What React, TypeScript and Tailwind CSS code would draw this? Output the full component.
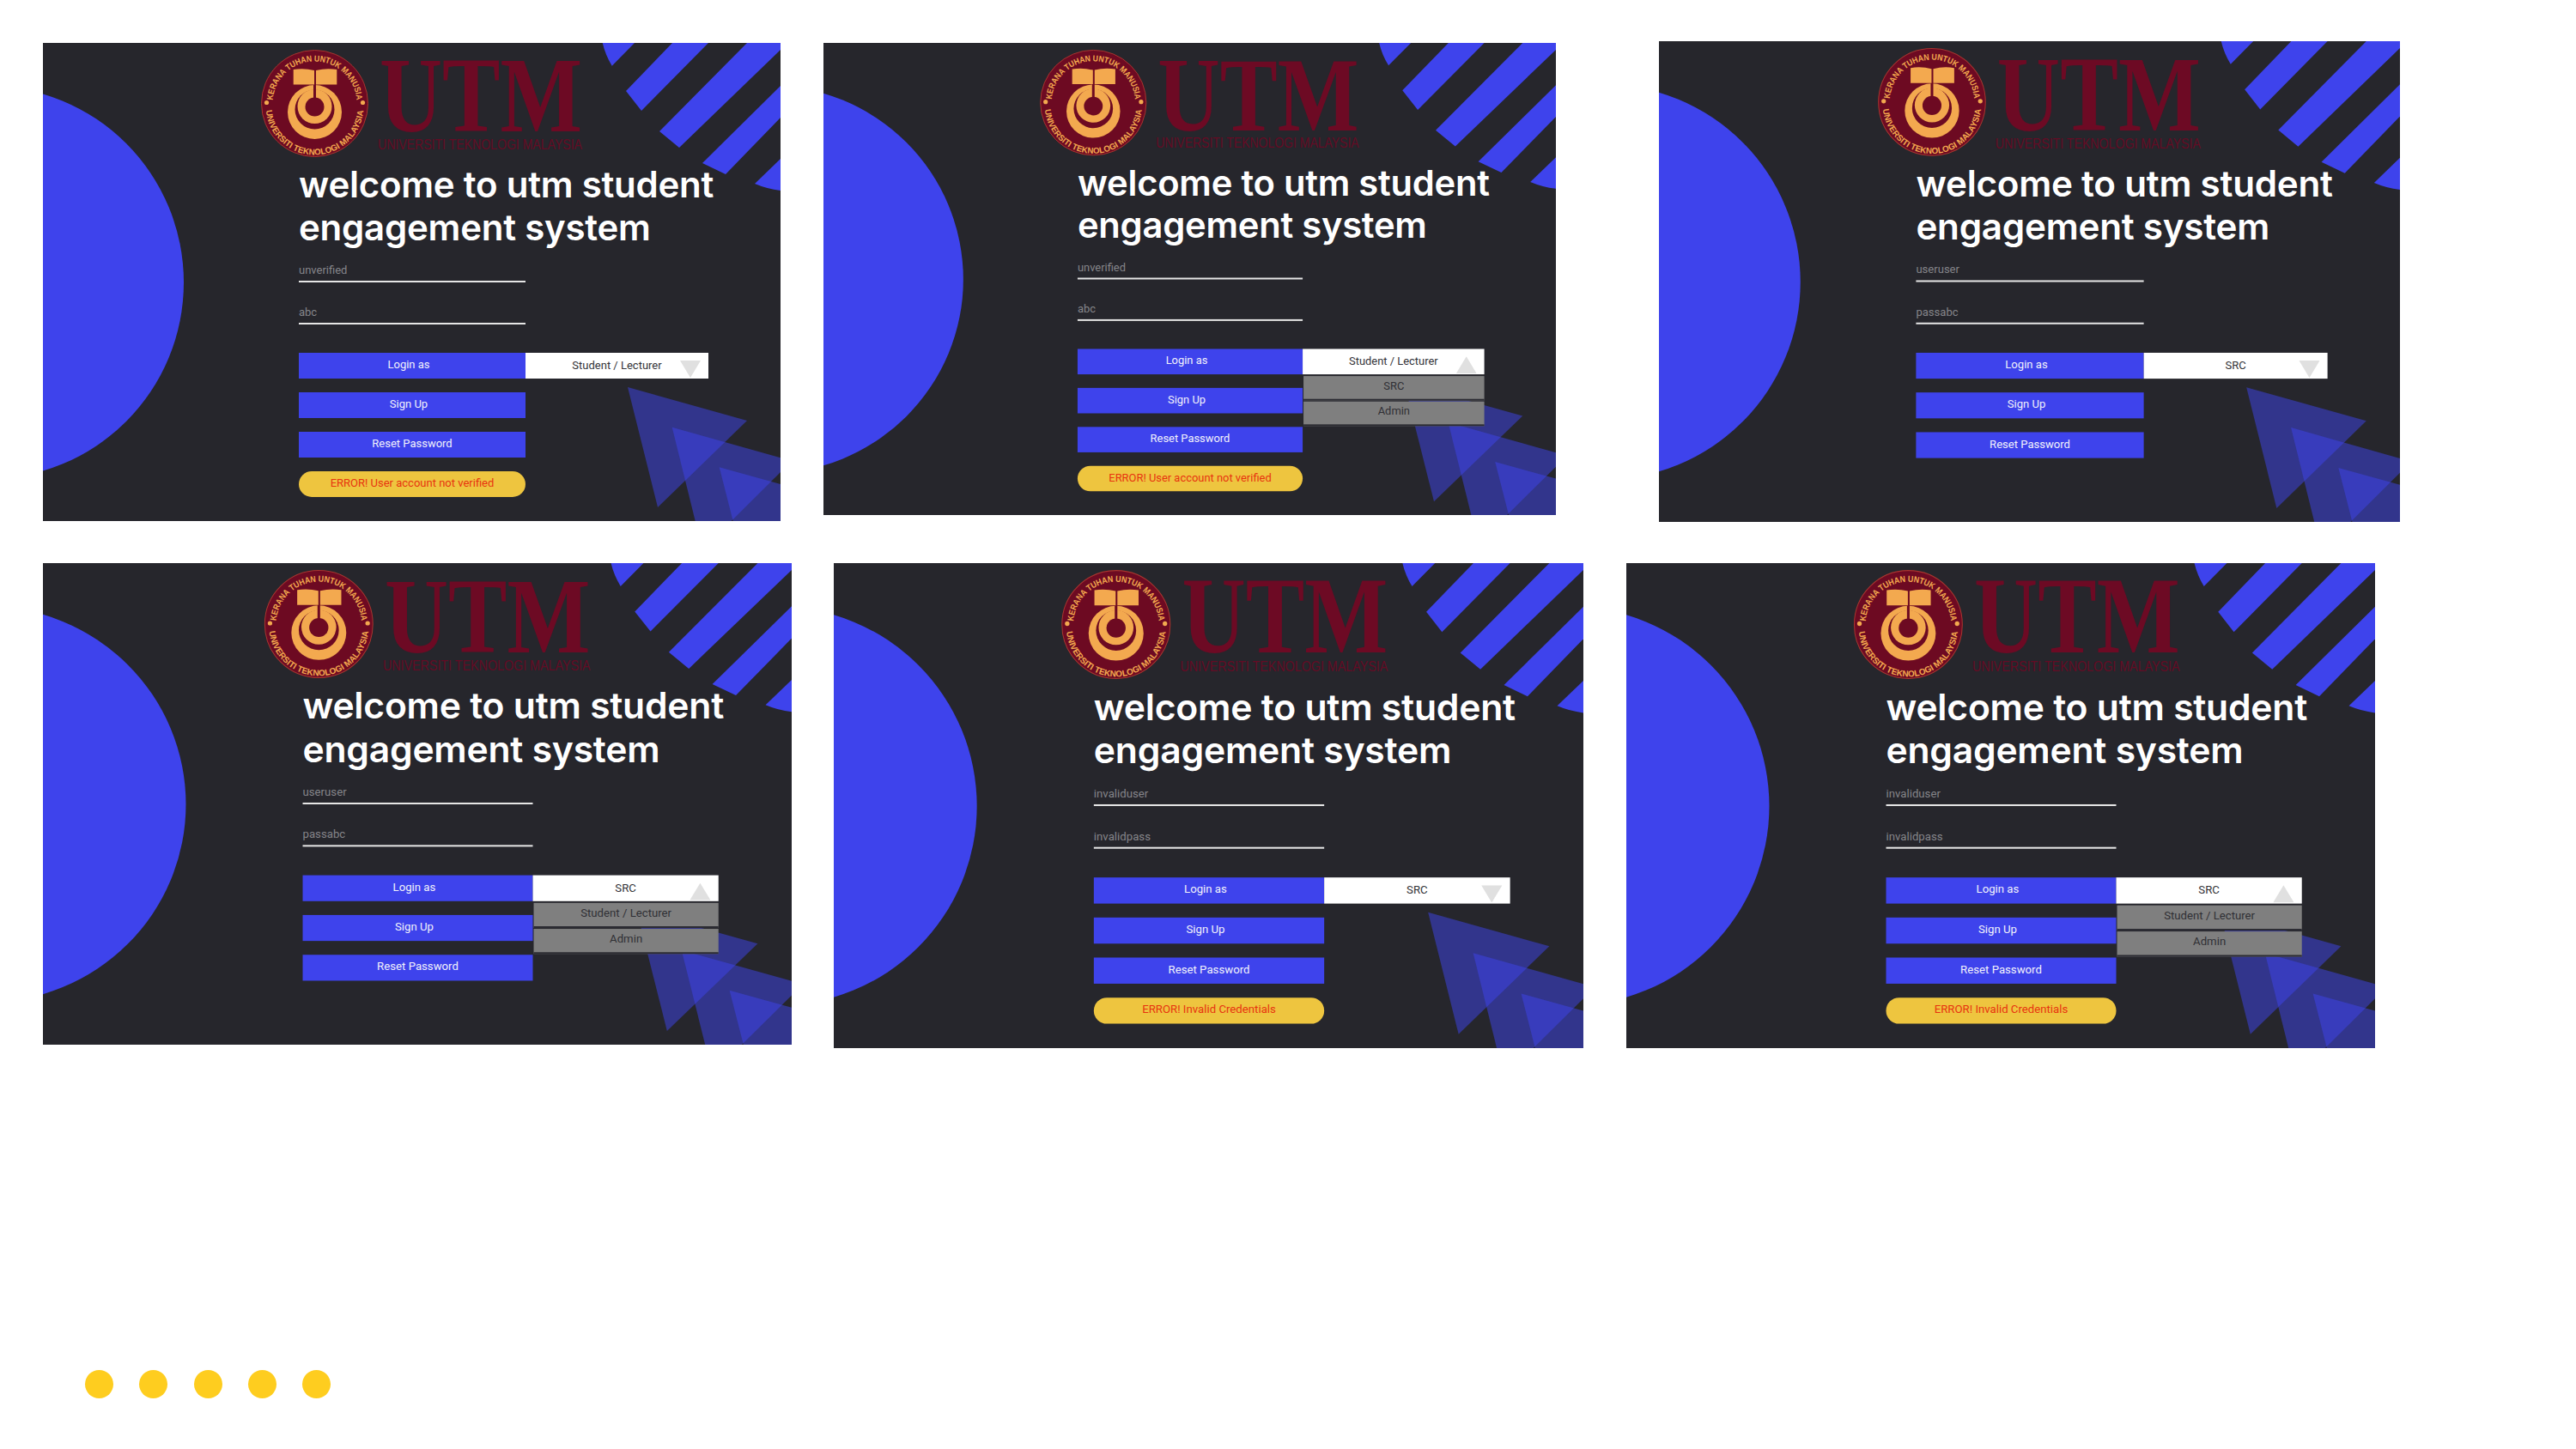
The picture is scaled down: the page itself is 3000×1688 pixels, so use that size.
import React from "react";

const W = 859;
const H = 557;

type CardProps = {
  id: string;
  box: string;
  w: number;
  h: number;
  user: string;
  pass: string;
  selected: string;
  options?: string[];
  error?: string;
  logoDx?: number;
};

function Background({ id, logoDx = 0 }: { id: string; logoDx?: number }) {
  const cx = 316.5;
  const cy = 70.5;
  const gold = "#f3a94f";
  const maroon = "#6d0a22";
  return (
    <svg viewBox={`0 0 ${W} ${H}`} className="absolute inset-0 w-full h-full">
      <circle cx={-65} cy={279} r={229} fill="#3e43ec" />
      <g fill="#3e43ec">
        <path d="M651.7 0 H689 L662.7 26.7 Q655 14 651.7 0 Z" />
        <polygon points="733,0 775,0 697,79 679,56" />
        <polygon points="820,0 859,0 859,8 741,122 718,103" />
        <polygon points="859,50 859,87 795,153 768,140" />
        <path d="M829 164 L859 135 V172 Q843 170 829 164 Z" />
      </g>
      <g fill="#3e43ec" fillOpacity="0.5">
        <polygon points="681,401 820,440 716,541" />
        <polygon points="732.7,447.7 872,487 768,590.6" />
        <polygon points="787.7,494.3 913,529 820,621" />
      </g>
      <g transform={`translate(${logoDx} 0)`}>
        <circle cx={cx} cy={cy} r={62} fill={maroon} stroke="#a8352f" strokeWidth="1" />
        <defs>
          <path id={`${id}-top`} d={`M ${cx - 49} ${cy} A 49 49 0 0 1 ${cx + 49} ${cy}`} />
          <path id={`${id}-bottom`} d={`M ${cx - 57} ${cy + 3} A 57 57 0 0 0 ${cx + 57} ${cy + 3}`} />
        </defs>
        <text fill={gold} fontSize="10" fontFamily="Liberation Sans, sans-serif" fontWeight="700">
          <textPath href={`#${id}-top`} startOffset="50%" textAnchor="middle" textLength={146} lengthAdjust="spacingAndGlyphs">
            KERANA TUHAN UNTUK MANUSIA
          </textPath>
        </text>
        <text fill={gold} fontSize="10" fontFamily="Liberation Sans, sans-serif" fontWeight="700">
          <textPath href={`#${id}-bottom`} startOffset="50%" textAnchor="middle" textLength={168} lengthAdjust="spacingAndGlyphs">
            UNIVERSITI TEKNOLOGI MALAYSIA
          </textPath>
        </text>
        <circle cx={cx - 56} cy={cy - 1} r={2.6} fill={gold} />
        <circle cx={cx + 56} cy={cy - 1} r={2.6} fill={gold} />
        <circle cx={cx} cy={80.5} r={31.5} fill={gold} />
        <circle cx={cx} cy={77.5} r={23} fill={maroon} />
        <circle cx={cx} cy={74} r={20} fill={gold} />
        <circle cx={cx} cy={74.5} r={11} fill={maroon} />
        <rect x={cx - 1.5} y={47} width={3} height={20} fill={maroon} />
        <path d="M291.7 31 Q304 29 316 32 V48.5 H291.7 Z" fill={gold} />
        <path d="M342.3 31 Q330 29 318 32 V48.5 H342.3 Z" fill={gold} />
        <text
          x={392}
          y={103}
          fontSize="125"
          textLength={236}
          lengthAdjust="spacingAndGlyphs"
          fill="#6d0a24"
          fontFamily="Liberation Serif, serif"
          fontWeight="700"
        >
          UTM
        </text>
        <text
          x={390}
          y={124}
          fontSize="17"
          textLength={238}
          lengthAdjust="spacingAndGlyphs"
          fill="#640b24"
          fontFamily="Liberation Sans, sans-serif"
        >
          UNIVERSITI TEKNOLOGI MALAYSIA
        </text>
      </g>
    </svg>
  );
}

function Field({ value, top }: { value: string; top: string }) {
  return (
    <div className={`w-[264px] h-[28px] pt-[2px] flex items-center text-[13px] text-[#85858a] border-b-2 border-[#e6e6e6] ${top}`}>
      {value}
    </div>
  );
}

function Btn({ label, top, pr }: { label: string; top: string; pr?: string }) {
  return (
    <div className={`w-[264px] h-[30px] pb-[3px] bg-[#3e43ec] text-[#f2f2fb] text-[13px] flex items-center justify-center ${top} ${pr ?? ""}`}>
      {label}
    </div>
  );
}

function Card({ id, box, w, h, user, pass, selected, options, error, logoDx }: CardProps) {
  const open = !!options;
  return (
    <div className={`relative overflow-hidden shrink-0 ${box}`}>
      <div
        className="relative bg-[#26262c] w-[859px] h-[557px] origin-top-left"
        style={{ transform: `scale(${w / W}, ${h / H})` }}
      >
        <Background id={id} logoDx={logoDx} />
        <div className="relative flex flex-col pl-[298px] pt-[140px] font-['Roboto',sans-serif]">
          <div className="text-white text-[42px] leading-[50px] font-semibold tracking-[-0.24px] whitespace-nowrap font-['Inter',sans-serif]">
            welcome to utm student
            <br />
            engagement system
          </div>
          <Field value={user} top="mt-[11px]" />
          <Field value={pass} top="mt-[21px]" />
          <div className="flex mt-[33px]">
            <Btn label="Login as" top="" pr="pr-[8px]" />
            <div className="relative w-[213px] h-[30px] bg-white text-[#333338] text-[13px] flex items-center justify-center">
              {selected}
              <svg viewBox="0 0 24 20" className="absolute right-[9px] top-[9px] w-[24px] h-[20px]">
                <polygon points={open ? "12,0 24,20 0,20" : "0,0 24,0 12,20"} fill="#e0e0e0" />
              </svg>
              {open && (
                <div className="absolute left-[1px] top-[32px] w-[212px] flex flex-col gap-[1px]">
                  {options!.map((o) => (
                    <div
                      key={o}
                      className="h-[29px] pb-[3px] bg-[#7f7f7f] border-b-2 border-[#2c2c33] text-[#303035] text-[13px] flex items-center justify-center"
                    >
                      {o}
                    </div>
                  ))}
                </div>
              )}
            </div>
          </div>
          <Btn label="Sign Up" top="mt-[16px]" pr="pr-[8px]" />
          <Btn label="Reset Password" top="mt-[16px]" />
          {error && (
            <div className="w-[264px] h-[30px] mt-[16px] pb-[2px] bg-[#eec53f] rounded-[15px] text-[#e8340f] text-[13px] flex items-center justify-center">
              {error}
            </div>
          )}
        </div>
      </div>
    </div>
  );
}

export default function App() {
  return (
    <div className="w-[3000px] h-[1688px] bg-white flex flex-col overflow-hidden">
      <div className="flex items-start h-[606px] pl-[50px]">
        <Card
          id="c1"
          box="w-[859px] h-[557px] mt-[50px]"
          w={859}
          h={557}
          user="unverified"
          pass="abc"
          selected="Student / Lecturer"
          error="ERROR! User account not verified"
        />
        <Card
          id="c2"
          box="w-[853px] h-[550px] mt-[50px] ml-[50px]"
          w={853}
          h={550}
          user="unverified"
          pass="abc"
          selected="Student / Lecturer"
          options={["SRC", "Admin"]}
          error="ERROR! User account not verified"
        />
        <Card
          id="c3"
          box="w-[863px] h-[560px] mt-[48px] ml-[120px]"
          w={863}
          h={560}
          user="useruser"
          pass="passabc"
          selected="SRC"
        />
      </div>
      <div className="flex items-start h-[565px] mt-[50px] pl-[50px]">
        <Card
          id="c4"
          box="w-[872px] h-[561px]"
          w={872}
          h={561}
          user="useruser"
          pass="passabc"
          selected="SRC"
          options={["Student / Lecturer", "Admin"]}
        />
        <Card
          id="c5"
          box="w-[873px] h-[565px] ml-[49px]"
          w={873}
          h={565}
          user="invaliduser"
          pass="invalidpass"
          selected="SRC"
          error="ERROR! Invalid Credentials"
          logoDx={7}
        />
        <Card
          id="c6"
          box="w-[872px] h-[565px] ml-[50px]"
          w={872}
          h={565}
          user="invaliduser"
          pass="invalidpass"
          selected="SRC"
          options={["Student / Lecturer", "Admin"]}
          error="ERROR! Invalid Credentials"
          logoDx={7}
        />
      </div>
      <div className="flex gap-[30.3px] pl-[99px] mt-[375px]">
        {[0, 1, 2, 3, 4].map((i) => (
          <div key={i} className="w-[33px] h-[33px] rounded-full bg-[#fecd1f]" />
        ))}
      </div>
    </div>
  );
}
